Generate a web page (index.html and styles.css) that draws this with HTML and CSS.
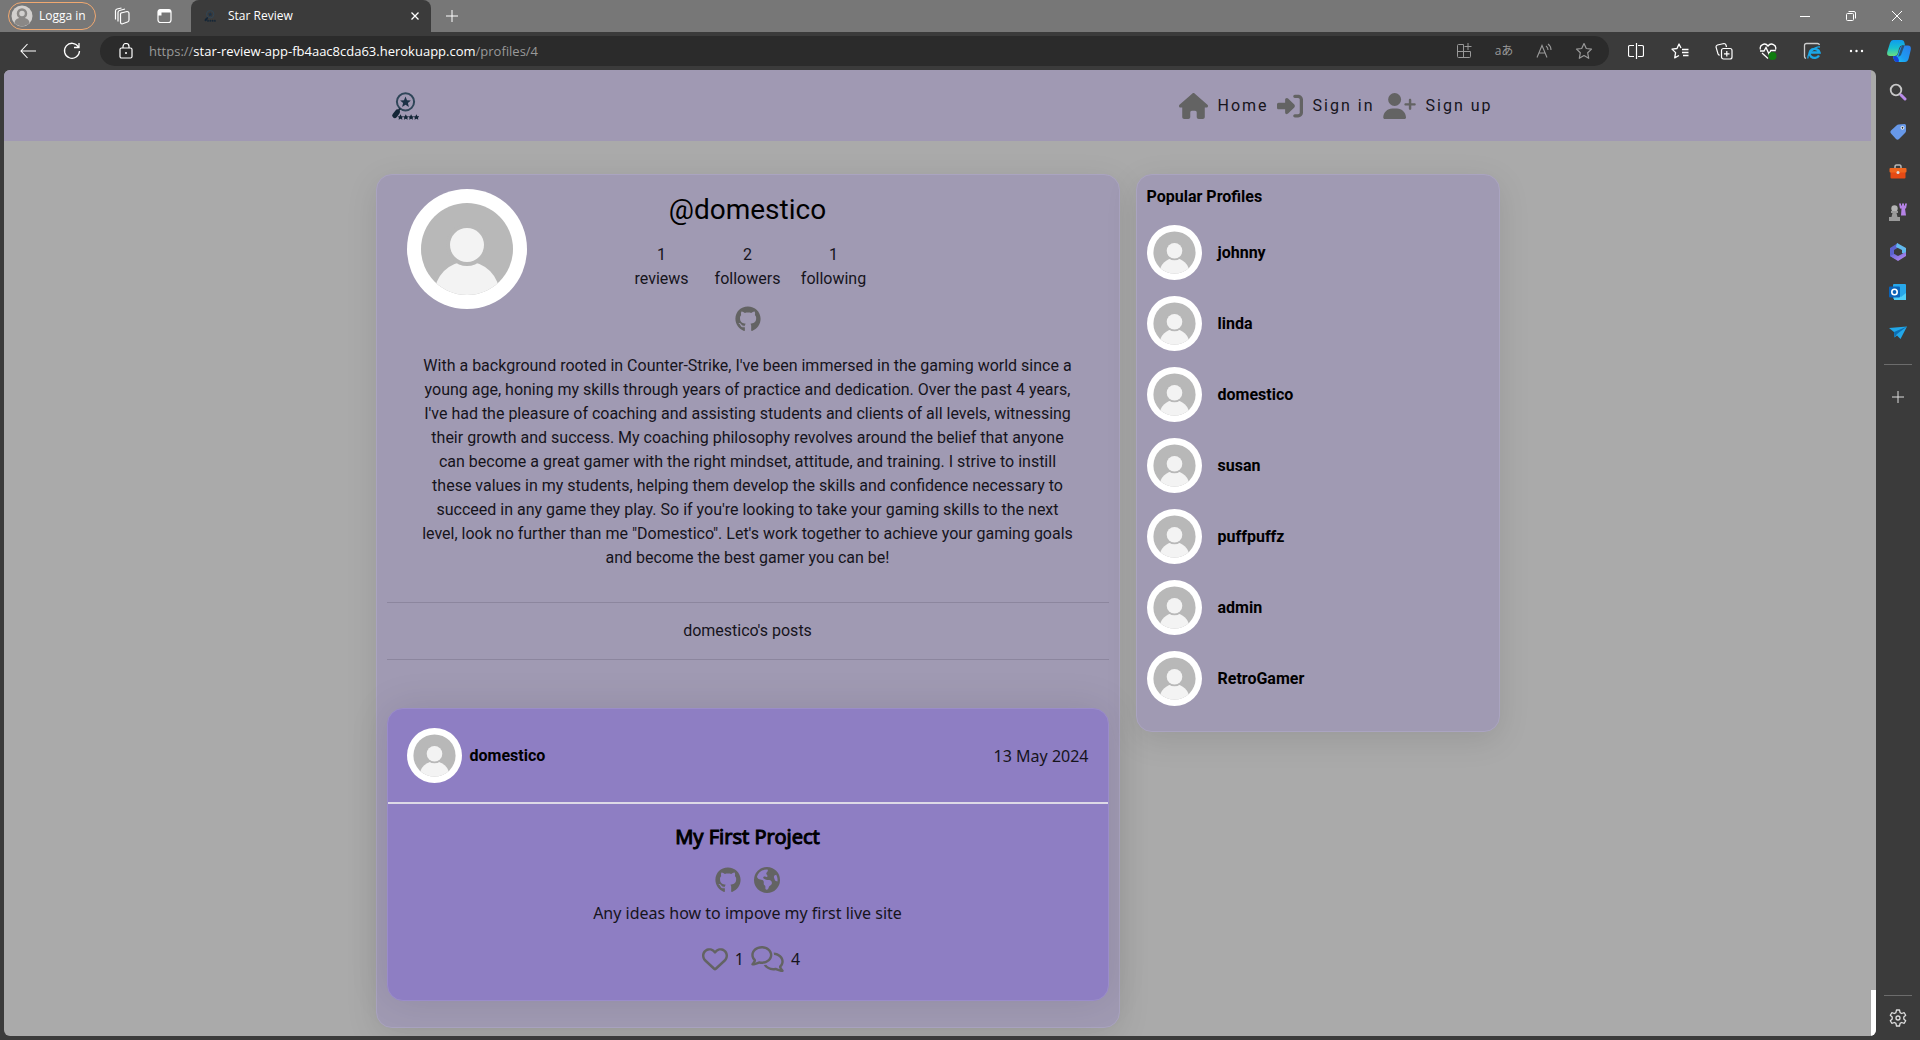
FILE: index.html
```html
<!DOCTYPE html>
<html lang="en">
<head>
<meta charset="utf-8">
<title>Star Review</title>
<link rel="stylesheet" href="styles.css">
</head>
<body>
<svg class="defs" aria-hidden="true">
  <defs>
    <linearGradient id="g-cop1" x1="0" y1="0" x2="0" y2="1"><stop offset="0" stop-color="#0f9bef"/><stop offset=".5" stop-color="#18bfd0"/><stop offset="1" stop-color="#6be07e"/></linearGradient>
    <linearGradient id="g-cop2" x1="1" y1="0" x2="0" y2="1"><stop offset="0" stop-color="#2b7be8"/><stop offset=".6" stop-color="#1c9df2"/><stop offset="1" stop-color="#1fd0f5"/></linearGradient>
    <linearGradient id="g-365" x1="0" y1="0" x2="1" y2="1"><stop offset="0" stop-color="#5a64d8"/><stop offset="1" stop-color="#c08cf0"/></linearGradient>
    <symbol id="house" viewBox="0 0 576 512"><path d="M575.8 255.5c0 18-15 32.1-32 32.1h-32l.7 160.2c0 2.7-.2 5.4-.5 8.1V472c0 22.1-17.9 40-40 40H456c-1.1 0-2.2 0-3.3-.1c-1.4 .1-2.8 .1-4.2 .1H416 392c-22.1 0-40-17.9-40-40V448 384c0-17.7-14.3-32-32-32H256c-17.7 0-32 14.3-32 32v64 24c0 22.1-17.9 40-40 40H160 128.1c-1.5 0-3-.1-4.5-.2c-1.2 .1-2.4 .2-3.6 .2H104c-22.1 0-40-17.9-40-40V360c0-.9 0-1.9 .1-2.8V287.6H32c-18 0-32-14-32-32.1c0-9 3-17 10-24L266.4 8c7-7 15-8 22-8s15 2 21 7L564.8 231.5c8 7 12 15 11 24z"/></symbol>
    <symbol id="signin" viewBox="0 0 512 512"><path d="M217.9 105.9L340.7 228.7c7.2 7.2 11.3 17.1 11.3 27.3s-4.1 20.1-11.3 27.3L217.9 406.1c-6.4 6.4-15 9.9-24 9.9c-18.7 0-33.9-15.2-33.9-33.9l0-62.1L32 320c-17.7 0-32-14.3-32-32l0-64c0-17.7 14.3-32 32-32l128 0 0-62.1c0-18.7 15.2-33.9 33.9-33.9c9 0 17.6 3.6 24 9.9zM352 416l64 0c17.7 0 32-14.3 32-32l0-256c0-17.7-14.3-32-32-32l-64 0c-17.7 0-32-14.3-32-32s14.3-32 32-32l64 0c53 0 96 43 96 96l0 256c0 53-43 96-96 96l-64 0c-17.7 0-32-14.3-32-32s14.3-32 32-32z"/></symbol>
    <symbol id="userplus" viewBox="0 0 640 512"><path d="M96 128a128 128 0 1 1 256 0A128 128 0 1 1 96 128zM0 482.3C0 383.8 79.8 304 178.3 304h91.4C368.2 304 448 383.8 448 482.3c0 16.4-13.3 29.7-29.7 29.7H29.7C13.3 512 0 498.7 0 482.3zM504 312V248H440c-13.3 0-24-10.7-24-24s10.7-24 24-24h64V136c0-13.3 10.7-24 24-24s24 10.7 24 24v64h64c13.3 0 24 10.7 24 24s-10.7 24-24 24H552v64c0 13.3-10.7 24-24 24s-24-10.7-24-24z"/></symbol>
    <symbol id="github" viewBox="0 0 496 512"><path d="M165.9 397.4c0 2-2.3 3.6-5.2 3.6-3.3.3-5.6-1.3-5.6-3.6 0-2 2.3-3.6 5.2-3.6 3-.3 5.6 1.3 5.6 3.6zm-31.1-4.5c-.7 2 1.3 4.3 4.3 4.9 2.6 1 5.6 0 6.2-2s-1.3-4.3-4.3-5.2c-2.6-.7-5.5.3-6.2 2.3zm44.2-1.7c-2.9.7-4.9 2.6-4.6 4.9.3 2 2.9 3.3 5.9 2.6 2.9-.7 4.9-2.6 4.6-4.6-.3-1.9-3-3.2-5.9-2.9zM244.8 8C106.1 8 0 113.3 0 252c0 110.9 69.8 205.8 169.5 239.2 12.8 2.3 17.3-5.6 17.3-12.1 0-6.2-.3-40.4-.3-61.4 0 0-70 15-84.7-29.8 0 0-11.4-29.1-27.8-36.6 0 0-22.9-15.7 1.6-15.4 0 0 24.9 2 38.6 25.8 21.9 38.6 58.6 27.5 72.9 20.9 2.3-16 8.8-27.1 16-33.7-55.9-6.2-112.3-14.3-112.3-110.5 0-27.5 7.6-41.3 23.6-58.9-2.6-6.5-11.1-33.3 2.6-67.9 20.9-6.5 69 27 69 27 20-5.6 41.5-8.5 62.8-8.5s42.8 2.9 62.8 8.5c0 0 48.1-33.6 69-27 13.7 34.7 5.2 61.4 2.6 67.9 16 17.7 25.8 31.5 25.8 58.9 0 96.5-58.9 104.2-114.8 110.5 9.2 7.9 17 22.9 17 46.4 0 33.7-.3 75.4-.3 83.6 0 6.5 4.6 14.4 17.3 12.1C428.2 457.8 496 362.9 496 252 496 113.3 383.5 8 244.8 8z"/></symbol>
    <symbol id="earth" viewBox="0 0 512 512"><path d="M57.7 193l9.4 16.4c8.3 14.5 21.9 25.2 38 29.8L163 255.7c17.2 4.9 29 20.6 29 38.5v39.9c0 11 6.2 21 16 25.9s16 14.9 16 25.9v39c0 15.6 14.9 26.9 29.9 22.6c16.1-4.6 28.6-17.5 32.7-33.8l2.8-11.2c4.2-16.9 15.2-31.4 30.3-40l8.1-4.6c15-8.5 24.2-24.5 24.2-41.7v-8.3c0-12.7-5.1-24.9-14.1-33.9l-3.9-3.9c-9-9-21.2-14.1-33.9-14.1H257c-11.1 0-22.1-2.9-31.8-8.4l-34.5-19.7c-4.3-2.5-7.6-6.5-9.2-11.2c-3.2-9.6 1.1-20 10.2-24.5l5.9-3c6.6-3.3 14.3-3.9 21.3-1.5l23.2 7.7c8.2 2.7 17.2-.4 21.9-7.5c4.7-7 4.2-16.3-1.2-22.8l-13.6-16.3c-10-12-9.9-29.5 .3-41.3l15.7-18.3c8.8-10.3 10.2-25 3.5-36.7l-2.4-4.2c-3.5-.2-6.9-.3-10.4-.3C163.1 48 84.4 108.9 57.7 193zM464 256c0-36.8-9.6-71.4-26.4-101.5L412 164.8c-15.7 6.3-23.8 23.8-18.5 39.8l16.9 50.7c3.5 10.4 12 18.3 22.6 20.9l29.1 7.3c1.2-9 1.8-18.2 1.8-27.5zM0 256a256 256 0 1 1 512 0A256 256 0 1 1 0 256z"/></symbol>
    <symbol id="heart" viewBox="0 0 512 512"><path d="M225.8 468.2l-2.5-2.3L48.1 303.2C17.4 274.7 0 234.7 0 192.8v-3.3c0-70.4 50-130.8 119.2-144C158.6 37.9 198.9 47 231 69.6c9 6.4 17.4 13.8 25 22.3c4.2-4.8 8.7-9.2 13.5-13.3c3.7-3.2 7.5-6.2 11.5-9c0 0 0 0 0 0C313.1 47 353.4 37.9 392.8 45.4C462 58.6 512 119.1 512 189.5v3.3c0 41.9-17.4 81.9-48.1 110.4L288.7 465.9l-2.5 2.3c-8.2 7.6-19 11.9-30.2 11.9s-22-4.2-30.2-11.9zM239.1 145c-.4-.3-.7-.7-1-1.1l-17.8-20c0 0-.1-.1-.1-.1c0 0 0 0 0 0c-23.1-25.9-58-37.7-92-31.2C81.6 101.5 48 142.1 48 189.5v3.3c0 28.5 11.9 55.8 32.8 75.2L256 430.7 431.2 268c20.9-19.4 32.8-46.7 32.8-75.2v-3.3c0-47.3-33.6-88-80.1-96.9c-34-6.5-69 5.4-92 31.2c0 0 0 0-.1 .1s0 0-.1 .1l-17.8 20c-.3 .4-.7 .7-1 1.1c-4.5 4.5-10.6 7-16.9 7s-12.4-2.5-16.9-7z"/></symbol>
    <symbol id="comments" viewBox="0 0 640 512"><path d="M88.2 309.1c9.8-18.3 6.8-40.8-7.5-55.8C59.4 230.9 48 204 48 176c0-63.5 63.8-128 160-128s160 64.5 160 128s-63.8 128-160 128c-13.1 0-25.8-1.3-37.8-3.6c-10.4-2-21.2-.6-30.7 4.2c-4.1 2.1-8.3 4.1-12.6 6c-16 7.2-32.9 13.5-49.9 18c2.8-4.6 5.4-9.1 7.9-13.6c1.1-1.9 2.2-3.9 3.2-5.9zM0 176c0 41.8 17.2 80.1 45.9 110.3c-.9 1.7-1.9 3.5-2.8 5.1c-10.3 18.4-22.3 36.5-36.6 52.1c-6.6 7-8.3 17.2-4.6 25.9C5.8 378.3 14.4 384 24 384c43 0 86.5-13.3 122.7-29.7c4.8-2.2 9.6-4.5 14.2-6.8c15.1 3 30.9 4.5 47.1 4.5c114.9 0 208-78.8 208-176S322.9 0 208 0S0 78.8 0 176zM432 480c16.2 0 31.9-1.6 47.1-4.5c4.6 2.3 9.4 4.6 14.2 6.8C529.5 498.7 573 512 616 512c9.6 0 18.2-5.7 22-14.5c3.8-8.8 2-19-4.6-25.9c-14.2-15.6-26.2-33.7-36.6-52.1c-.9-1.7-1.9-3.4-2.8-5.1C622.8 384.1 640 345.8 640 304c0-94.4-87.9-171.5-198.2-175.8c4.1 15.2 6.2 31.2 6.2 47.8l0 .6c87.2 6.7 144 67.5 144 127.4c0 28-11.4 54.9-32.7 77.2c-14.3 15-17.3 37.6-7.5 55.8c1.1 2 2.2 4 3.2 5.9c2.5 4.5 5.2 9 7.9 13.6c-17-4.5-33.9-10.7-49.9-18c-4.3-1.9-8.5-3.9-12.6-6c-9.5-4.8-20.3-6.2-30.7-4.2c-12.1 2.4-24.8 3.6-37.8 3.6c-61.7 0-110-26.5-136.8-62.3c-16 5.4-32.8 9.4-50 11.8C279 439.8 350 480 432 480z"/></symbol>
    <clipPath id="disc"><circle cx="60" cy="60" r="46"/></clipPath>
    <symbol id="avatar" viewBox="0 0 120 120"><circle cx="60" cy="60" r="60" fill="#fff"/><circle cx="60" cy="60" r="46" fill="#b8b8b8"/><g clip-path="url(#disc)"><circle cx="60" cy="105" r="32.500" fill="#f3f3f3"/><circle cx="60" cy="56" r="21" fill="#b8b8b8"/></g><circle cx="60" cy="56" r="17" fill="#f3f3f3"/></symbol>
    <symbol id="logo" viewBox="0 0 28 28"><circle cx="14.500" cy="9.800" r="8.600" fill="none" stroke="#2f4659" stroke-width="2"/><path d="M14.500 4.500l1.500 3.700 3.900.3-3 2.500 1 3.900-3.400-2.100-3.400 2.100 1-3.900-3-2.500 3.900-.3z" fill="#1c3247"/><path d="M6.500 20l-2.800 3.600" stroke="#142637" stroke-width="5" stroke-linecap="round"/><path d="M9.200 16.500l-2 2.500" stroke="#142637" stroke-width="2"/><path id="st" d="M9.500 22.300l1 1.900 2 .2-1.500 1.400.4 2-1.900-1-1.900 1 .4-2-1.500-1.400 2-.2z" fill="#142637"/><use href="#st" x="5.300"/><use href="#st" x="10.600"/><use href="#st" x="15.900"/></symbol>
    <symbol id="plus" viewBox="0 0 16 16"><path d="M8 2v12M2 8h12" fill="none" stroke="currentColor"/></symbol>
  </defs>
</svg>

<div class="tabstrip">
  <button class="account"><svg class="face" viewBox="0 0 22 22"><circle cx="11" cy="11" r="10.500" fill="#d2d0ce"/><circle cx="11" cy="8.500" r="4" fill="#d2d0ce" stroke="#8a8886" stroke-width="2.500"/><path d="M3.500 18a7.500 5.500 0 0 1 15 0a10.500 10.500 0 0 1-15 0z" fill="#8a8886"/></svg>Logga in</button>
  <button class="chrome-btn" aria-label="Workspaces"><svg class="i18" viewBox="0 0 18 18"><g fill="none" stroke="currentColor" stroke-width="1.200"><path d="M8 6l6-1.500q2 0 2 2V13q0 1.500-1.500 2L9 17q-1.500 0-1.500-2V7q0-1 1-1.200"/><path d="M5 14.500V5.500q0-1.500 1.500-2L12 2M2.500 12.500V4q0-1.500 1.500-2L8.500 1"/></g></svg></button>
  <button class="chrome-btn" aria-label="Tab actions"><svg class="i18" viewBox="0 0 18 18"><rect x="3" y="2.500" width="13" height="13" rx="2.500" fill="none" stroke="currentColor" stroke-width="1.200"/><path d="M3 5.500V4.500q0-2 2-2h9q2 0 2 2v1zM3 5.500h3.500v3H3z" fill="currentColor"/></svg></button>
  <div class="tab"><svg class="favicon"><use href="#logo"/></svg><span class="tab-title">Star Review</span><button class="tab-x" aria-label="Close tab"><svg class="i10" viewBox="0 0 10 10"><path d="M1.500 1.500l7 7M8.500 1.500l-7 7" stroke="currentColor" stroke-width="1.300"/></svg></button></div>
  <button class="chrome-btn" aria-label="New tab"><svg class="i16"><use href="#plus"/></svg></button>
  <div class="window-btns">
    <button aria-label="Minimize"><svg class="i12" viewBox="0 0 12 12"><path d="M1 6.500h10" stroke="currentColor"/></svg></button>
    <button aria-label="Restore"><svg class="i12" viewBox="0 0 12 12"><g fill="none" stroke="currentColor"><rect x="1.500" y="3.500" width="7" height="7" rx="1"/><path d="M3.500 1.500h5.500q1.500 0 1.500 1.500v5.500"/></g></svg></button>
    <button aria-label="Close"><svg class="i12" viewBox="0 0 12 12"><path d="M1 1l10 10M11 1L1 11" stroke="currentColor"/></svg></button>
  </div>
</div>

<div class="toolbar">
  <button class="nav-btn" aria-label="Back"><svg class="i18" viewBox="0 0 18 18"><path d="M8.500 2L2 9l6.500 7M2 9h15" fill="none" stroke="currentColor" stroke-width="1.100"/></svg></button>
  <button class="nav-btn" aria-label="Reload"><svg class="i18" viewBox="0 0 18 18"><path d="M15.500 5A7.500 7.500 0 1 0 16.500 9M16 1v4.500h-5" fill="none" stroke="currentColor" stroke-width="1.300"/></svg></button>
  <div class="address">
    <svg class="i16" viewBox="0 0 16 16"><rect x="2" y="5" width="12" height="10" rx="1.500" fill="none" stroke="#fff" stroke-width="1.200"/><path d="M5 5V3.500a3 3 0 0 1 6 0V5" fill="none" stroke="#fff" stroke-width="1.200"/><circle cx="8" cy="10" r="1" fill="#fff"/></svg>
    <span class="url">https://<b>star-review-app-fb4aac8cda63.herokuapp.com</b>/profiles/4</span>
    <button aria-label="App available"><svg class="i16" viewBox="0 0 16 16"><path d="M7.500 1.500H2.500q-1 0-1 1v11q0 1 1 1h11q1 0 1-1V8.500h-13M7.500 1.500v13M12 0v7M8.500 3.500h7" fill="none" stroke="currentColor"/></svg></button>
    <button class="translate" aria-label="Translate">aあ</button>
    <button aria-label="Read aloud"><svg class="i16" viewBox="0 0 16 16"><path d="M1 14.500L6 2.500l5 12M3 10h6M10 3q2 1.500 2 4M12 1q3 2 3 6" fill="none" stroke="currentColor" stroke-width="1.100"/></svg></button>
    <button aria-label="Add favorite"><svg class="i18" viewBox="0 0 18 18"><path d="M9 1.500l2.300 5 5.200.6-3.800 3.700 1 5.500L9 13.600l-4.700 2.700 1-5.500L1.500 7.100l5.200-.6z" fill="none" stroke="currentColor" stroke-width="1.200" stroke-linejoin="round"/></svg></button>
  </div>
  <div class="tools">
    <button aria-label="Split screen"><svg class="i16" viewBox="0 0 16 16"><path d="M6 2.500H2q-1.500 0-1.500 1.500v8q0 1.500 1.500 1.500h4M10 2.500h4q1.500 0 1.500 1.500v8q0 1.500-1.500 1.500h-4M8.500 0v16" fill="none" stroke="currentColor" stroke-width="1.200"/></svg></button>
    <button aria-label="Favorites"><svg class="i18" viewBox="0 0 18 18"><path d="M10 6L8 2 6 6.500l-5 .6 3.600 3.500-.9 5.300L8 13.500M11 7.500h6.500M11 10.500h6.500M12 13.500h5.500" fill="none" stroke="currentColor" stroke-width="1.300" stroke-linejoin="round"/></svg></button>
    <button aria-label="Collections"><svg class="i18" viewBox="0 0 18 18"><g fill="none" stroke="currentColor" stroke-width="1.200"><rect x="6.500" y="6.500" width="10.500" height="10.500" rx="2"/><path d="M11.800 9v5.500M9 11.800h5.500M4.500 13.500L3 12 1 5q0-1.500 1.500-2L9 1.500q1.500 0 2 1.500l.5 2"/></g></svg></button>
    <button aria-label="Browser essentials"><svg class="i18" viewBox="0 0 18 18"><path d="M1.500 7.500C0 3 6 0 9 4c3-4 9-1 7.500 3.500M3 11l6 5.500M1 9h4l2-3.500 3 6.500 1.800-3.500h5" fill="none" stroke="currentColor" stroke-width="1.300"/><circle cx="13.500" cy="14" r="4" fill="#107c10"/></svg></button>
    <button aria-label="Internet Explorer mode"><svg class="i18" viewBox="0 0 18 18"><path d="M3 16.500q-1.500-.5-1.500-2v-11q0-2 2-2h11q1.500 0 2 1.500" fill="none" stroke="#ccc" stroke-width="1.300"/><path d="M16 13.500a5 4.500 0 1 1 .5-3H7.500" fill="none" stroke="#1ba8e8" stroke-width="2.400"/><path d="M5 16.500C4 12 12 4 17 5" fill="none" stroke="#1ba8e8" stroke-width="1.300"/></svg></button>
    <button aria-label="More"><svg class="i16" viewBox="0 0 16 16"><g fill="currentColor"><circle cx="3" cy="8" r="1.200"/><circle cx="8.500" cy="8" r="1.200"/><circle cx="14" cy="8" r="1.200"/></g></svg></button>
    <button class="copilot" aria-label="Copilot"><svg class="i24" viewBox="0 0 24 24"><path d="M6 1h8.500q2.500 0 3 3l.5 2.500h-3q-2 0-3 3L11 14q-1 3-3 3H3q-4 0-2.500-5L3 4q1-3 3-3z" fill="url(#g-cop1)"/><path d="M18 23H9.500q-2 0-2.800-3L6 17h2q2.500 0 3.500-3.500L13 9q1-2.500 3-2.500h5q4 0 2.500 5.500L21.500 20q-1 3-3.500 3z" fill="url(#g-cop2)"/><path d="M6 17h3q2.500 1 3 5l-.5 1h-2q-2 0-2.800-3z" fill="#1742d8"/><path d="M15 6.500h2.500L14 16q-1 1.500-3 1.500 1-1.500 1.500-4z" fill="#2b2b2b" opacity=".6"/></svg></button>
  </div>
</div>

<div class="workspace">
  <div class="viewport">
    <div class="page">
      <header class="site-header">
        <div class="container nav">
          <a href="#" class="brand" aria-label="Star Review"><svg class="logo"><use href="#logo"/></svg></a>
          <nav>
            <a href="#"><svg class="fa w29"><use href="#house"/></svg>Home</a>
            <a href="#"><svg class="fa"><use href="#signin"/></svg>Sign in</a>
            <a href="#"><svg class="fa w33"><use href="#userplus"/></svg>Sign up</a>
          </nav>
        </div>
      </header>
      <main class="container columns">
        <section class="card profile">
          <div class="profile-head">
            <svg class="avatar-lg"><use href="#avatar"/></svg>
            <div class="profile-info">
              <h1>@domestico</h1>
              <div class="stats"><div>1<br>reviews</div><div>2<br>followers</div><div>1<br>following</div></div>
              <a href="#" class="link-icon" aria-label="GitHub"><svg class="fa"><use href="#github"/></svg></a>
            </div>
          </div>
          <p class="bio">With a background rooted in Counter-Strike, I've been immersed in the gaming world since a young age, honing my skills through years of practice and dedication. Over the past 4 years, I've had the pleasure of coaching and assisting students and clients of all levels, witnessing their growth and success. My coaching philosophy revolves around the belief that anyone can become a great gamer with the right mindset, attitude, and training. I strive to instill these values in my students, helping them develop the skills and confidence necessary to succeed in any game they play. So if you're looking to take your gaming skills to the next level, look no further than me "Domestico". Let's work together to achieve your gaming goals and become the best gamer you can be!</p>
          <p class="posts-label">domestico's posts</p>
          <article class="post">
            <div class="post-head">
              <a href="#" class="person"><svg class="avatar"><use href="#avatar"/></svg>domestico</a>
              <span>13 May 2024</span>
            </div>
            <div class="post-body">
              <h2>My First Project</h2>
              <div class="links"><a href="#" aria-label="Repository"><svg class="fa"><use href="#github"/></svg></a><a href="#" aria-label="Live site"><svg class="fa"><use href="#earth"/></svg></a></div>
              <p class="desc">Any ideas how to impove my first live site</p>
              <div class="reactions"><svg class="fa"><use href="#heart"/></svg><span>1</span><svg class="fa w33"><use href="#comments"/></svg><span>4</span></div>
            </div>
          </article>
        </section>
        <aside class="card popular">
          <h3>Popular Profiles</h3>
          <ul>
            <li><a href="#"><svg class="avatar"><use href="#avatar"/></svg>johnny</a></li>
            <li><a href="#"><svg class="avatar"><use href="#avatar"/></svg>linda</a></li>
            <li><a href="#"><svg class="avatar"><use href="#avatar"/></svg>domestico</a></li>
            <li><a href="#"><svg class="avatar"><use href="#avatar"/></svg>susan</a></li>
            <li><a href="#"><svg class="avatar"><use href="#avatar"/></svg>puffpuffz</a></li>
            <li><a href="#"><svg class="avatar"><use href="#avatar"/></svg>admin</a></li>
            <li><a href="#"><svg class="avatar"><use href="#avatar"/></svg>RetroGamer</a></li>
          </ul>
        </aside>
      </main>
    </div>
    <div class="scroll"><div class="thumb"></div></div>
  </div>
  <div class="sidebar">
    <button aria-label="Search"><svg class="i18" viewBox="0 0 18 18"><circle cx="7" cy="7" r="5.300" fill="none" stroke="#c8c8c8" stroke-width="1.800"/><path d="M12 12l4 4" stroke="#b98bea" stroke-width="3" stroke-linecap="round"/></svg></button>
    <button aria-label="Shopping"><svg class="i18" viewBox="0 0 18 18"><path d="M9.500 1.500L15.500 1q1.500 0 1.500 1.500V8q0 1-1 2l-6 6q-1.500 1.500-3 0l-5-5.500q-1.500-1.500 0-3L7.500 2.500q1-1 2-1z" fill="#6798e8"/><circle cx="13.500" cy="4.800" r="1.400" fill="#234" stroke="#fff"/></svg></button>
    <button aria-label="Tools"><svg class="i18" viewBox="0 0 18 18"><path d="M6 5V4q0-2 1.500-2h3Q12 2 12 4v1" fill="none" stroke="#b8b8b8" stroke-width="1.500"/><rect x="1.500" y="7" width="15" height="8.500" rx="1" fill="#e64a14"/><rect x=".5" y="5" width="17" height="4.500" rx="1" fill="#f0651e"/><circle cx="9" cy="9.500" r="1.500" fill="#ddd"/></svg></button>
    <button aria-label="Games"><svg class="i18" viewBox="0 0 18 18"><path d="M10 .5h2v2h1v-2h2v2h1v-2h2l-1 5h-1l1 7h-5l.5-7h-1.500z" fill="#b583e6"/><circle cx="5.500" cy="5.500" r="3.200" fill="#b4b4b4"/><path d="M2 8h7v2H7.500l1 4H11v4H0v-4h2.500l1-4H2z" fill="#9a9a9a"/></svg></button>
    <button aria-label="Microsoft 365"><svg class="i18" viewBox="0 0 18 18"><path d="M9 0L1 5v8l5 3 1-4-2-1V7l5-3z" fill="#5b62cf"/><path d="M8 0l9 5v7l-4-2V7L7 4z" fill="#62b9ed"/><path d="M1 13l4-2 4 2 8-4v4l-8 5z" fill="url(#g-365)"/></svg></button>
    <button aria-label="Outlook"><svg class="i18" viewBox="0 0 18 18"><rect x="4" y="1" width="13" height="15" rx="1" fill="#28a8ea"/><path d="M5 10l7 4 5-4v7H5z" fill="#50d0f8"/><rect x="0" y="3.500" width="11" height="11" rx="1" fill="#0a63b8"/><circle cx="5.500" cy="9" r="2.700" fill="none" stroke="#fff" stroke-width="1.600"/></svg></button>
    <button aria-label="Drop"><svg class="i18" viewBox="0 0 18 18"><path d="M0 5l18-1.500L11.500 16 8 12.500 5.500 14.500 5 9z" fill="#22a7e8"/><path d="M18 3.500L5 9l.5 5.500L8 11z" fill="#0c6eb4"/></svg></button>
    <hr>
    <button aria-label="Customize"><svg class="i16"><use href="#plus"/></svg></button>
    <div class="bottom">
      <hr>
      <button aria-label="Settings"><svg class="i18" viewBox="0 0 18 18"><g fill="none" stroke="currentColor" stroke-width="1.300" stroke-linejoin="round"><path d="M7.500 1h3l.6 2.600 1.500.9 2.600-.8 1.500 2.600L14.800 8v2l1.900 1.700-1.500 2.600-2.600-.8-1.500.9-.6 2.600h-3l-.6-2.600-1.500-.9-2.600.8-1.500-2.600L3.200 10V8L1.300 6.300l1.500-2.600 2.600.8 1.500-.9z"/><circle cx="9" cy="9" r="2"/></g></svg></button>
    </div>
  </div>
</div>
</body>
</html>
```
FILE: styles.css
```css
* { box-sizing: border-box; }
body {
  margin: 0;
  min-height: 100vh;
  display: flex;
  flex-direction: column;
  background: #3b3b3b;
  font: 16px/24px Roboto, sans-serif;
  color: #16141c;
}
h1, h2, h3, p, ul { margin: 0; padding: 0; }
ul { list-style: none; }
a { color: #000; text-decoration: none; }
svg { display: block; flex: none; }
button { border: 0; padding: 0; background: none; color: inherit; font: inherit; display: flex; align-items: center; justify-content: center; }
.defs { position: absolute; width: 0; height: 0; }
.i10 { width: 10px; height: 10px; }
.i12 { width: 12px; height: 12px; }
.i16 { width: 16px; height: 16px; }
.i18 { width: 18px; height: 18px; }
.i24 { width: 24px; height: 24px; }

/* browser frame */
.tabstrip, .toolbar { display: flex; align-items: center; color: #fff; font: 12px/16px "Open Sans", sans-serif; }
.tabstrip { height: 32px; background: #777; padding-left: 8px; }
.account { width: 88px; height: 28px; border: 1px solid #f0a870; border-radius: 14px; gap: 6px; justify-content: flex-start; padding-left: 2px; white-space: nowrap; }
.face { width: 22px; height: 22px; }
.chrome-btn { width: 42px; height: 32px; }
.account + .chrome-btn { margin-left: 5px; }
.tab { width: 240px; height: 32px; margin-left: 6px; padding: 0 11px; display: flex; align-items: center; background: #3b3b3b; border-radius: 8px 8px 0 0; }
.favicon { width: 12px; height: 12px; margin: 0 12px 0 2px; }
.tab-title { flex: 1; }
.window-btns { display: flex; margin-left: auto; }
.window-btns button { width: 46px; height: 32px; }
.toolbar { height: 38px; }
.nav-btn { width: 44px; height: 38px; }
.toolbar > .nav-btn:first-child { margin-left: 6px; }
.address { flex: 1; height: 30px; margin-left: 6px; padding: 0 5px 0 18px; border-radius: 15px; background: #2b2b2b; color: #999; display: flex; align-items: center; }
.address button { width: 40px; height: 30px; }
.address .translate { font: 12px/16px "Open Sans", "Noto Sans CJK JP", sans-serif; }
.url { flex: 1; margin-left: 15px; font-size: 13px; }
.url b { font-weight: 400; color: #fff; }
.tools { display: flex; margin-left: 5px; }
.tools button { width: 44px; height: 38px; }
.tools .copilot { width: 42px; }
.workspace { flex: 1; display: flex; }
.viewport { flex: 1; min-width: 0; display: flex; margin: 0 0 4px 4px; border-radius: 6px; overflow: hidden; background: #aaa; }
.page { flex: 1; min-width: 0; }
.scroll { width: 5px; display: flex; flex-direction: column; justify-content: flex-end; }
.thumb { height: 46px; background: #fff; }
.sidebar { width: 44px; padding: 2px 0; display: flex; flex-direction: column; align-items: center; color: #ddd; }
.sidebar button { width: 44px; height: 40px; }
.sidebar hr { width: 28px; height: 1px; margin: 12px 0; border: 0; background: #6c6c6c; }
.bottom { margin-top: auto; }
.sidebar .bottom hr { margin: 0 auto 2px; }

/* site */
.container { width: 100%; max-width: 1140px; margin: 0 auto; }
.site-header { background: #a099b3; }
.nav { height: 71px; padding: 0 15px 0 23px; display: flex; align-items: center; justify-content: space-between; }
.logo { width: 28px; height: 28px; }
.nav nav { display: flex; gap: 8px; }
.nav nav a { display: flex; align-items: center; gap: 10px; letter-spacing: 2px; color: #16141c; }
.fa { width: 26px; height: 26px; fill: #636363; }
.w29 { width: 29px; }
.w33 { width: 33px; }
.columns { display: grid; grid-template-columns: 2fr 1fr; align-items: start; padding-top: 33px; }
.card { margin: 0 8px; border: 1px solid #aaa4c0; border-radius: 16px; background: #a09ab3; box-shadow: 0 8px 32px rgba(0, 0, 0, .1); }
.profile { padding: 14px 10px 26px; text-align: center; }
.profile-head { display: grid; grid-template-columns: 1fr 2fr 1fr; padding-bottom: 22px; }
.avatar-lg { width: 120px; height: 120px; margin-left: 20px; }
.profile-info { display: flex; flex-direction: column; align-items: center; }
.profile h1 { margin: 3px 0 15px; font-size: 28px; line-height: 36px; font-weight: 400; color: #000; }
.stats { display: grid; grid-template-columns: repeat(3, 86px); }
.link-icon { margin-top: 15px; }
.bio { padding: 0 32px; }
.posts-label { margin: 32px 0 48px; padding: 16px 0; border: solid #8c869e; border-width: 1px 0; }
.post { border: 1px solid #9a8cca; border-radius: 16px; background: #8e7ec3; font-family: "Noto Sans", sans-serif; box-shadow: 0 0 40px rgba(0, 0, 0, .1); }
.post-head { display: flex; align-items: center; justify-content: space-between; padding: 19px; border-bottom: 2px solid #ddd9e6; }
.person { display: flex; align-items: center; gap: 8px; font: 700 16px/24px Roboto, sans-serif; }
.avatar { width: 55px; height: 55px; }
.post-body { padding: 21px 20px 28px; }
.post h2 { font-size: 20px; line-height: 24px; font-weight: 400; color: #000; -webkit-text-stroke: 1px #000; }
.links { display: flex; justify-content: center; gap: 13px; margin: 18px 0 8px; }
.reactions { display: flex; align-items: center; justify-content: center; gap: 7px; margin-top: 21px; padding-left: 7px; }
.popular { padding: 10px 10px 17px; }
.popular h3 { font-size: 16px; line-height: 24px; font-weight: 700; color: #000; }
.popular li { padding: 8px 0; }
.popular ul { padding-top: 8px; }
.popular a { display: flex; align-items: center; gap: 16px; font-weight: 700; }
```
